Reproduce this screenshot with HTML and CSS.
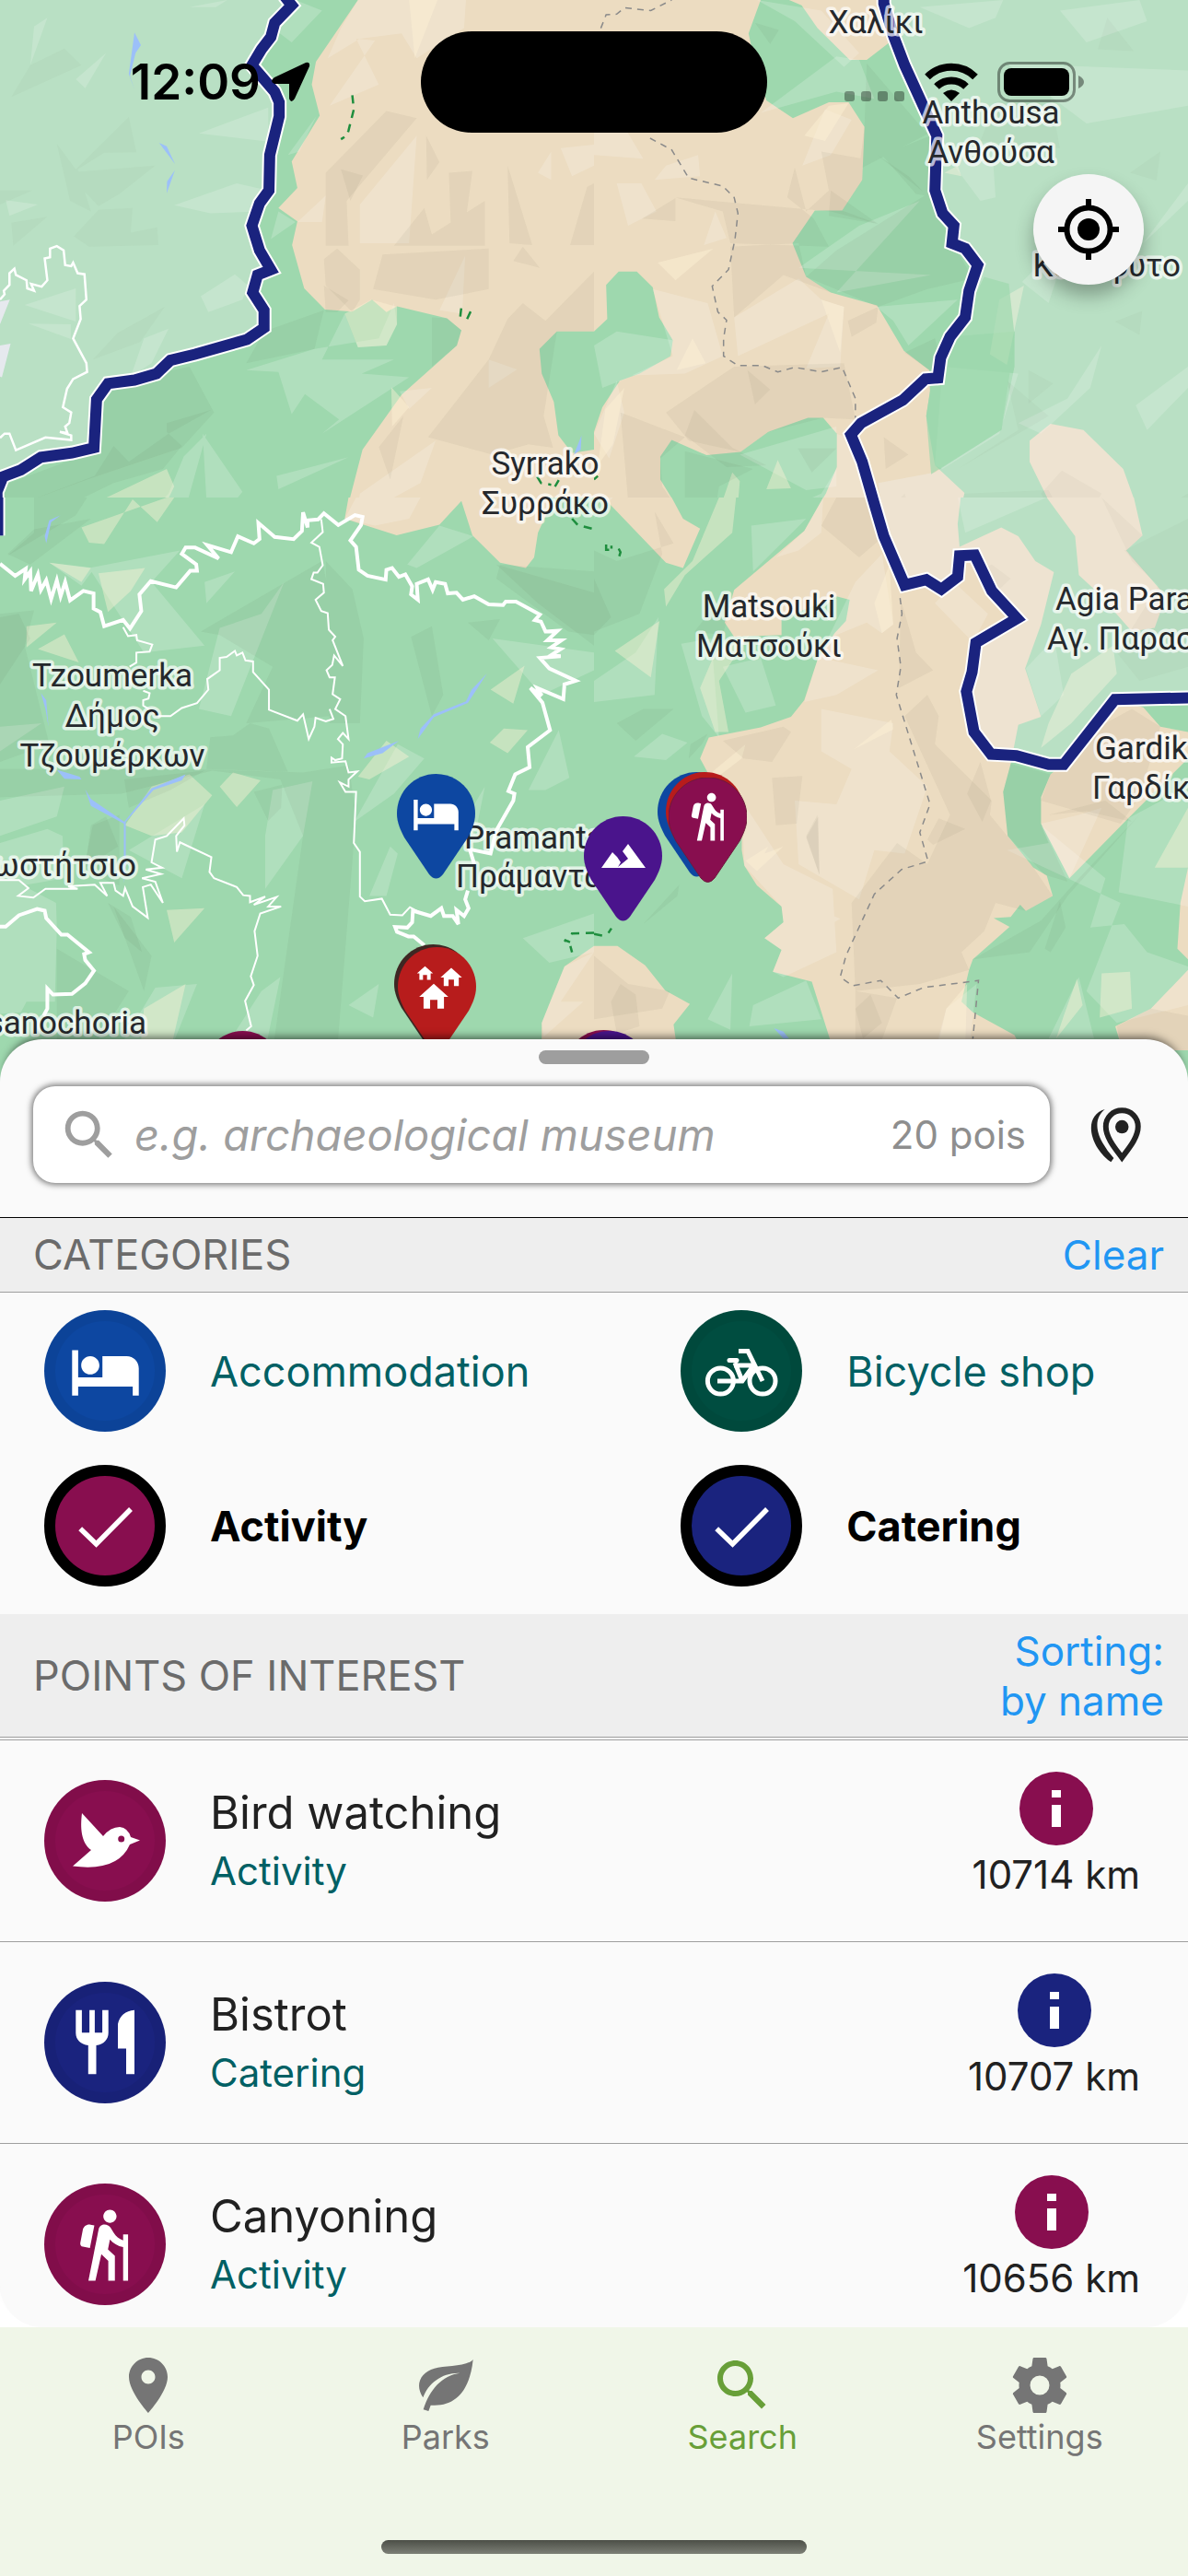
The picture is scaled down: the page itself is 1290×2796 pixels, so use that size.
FILE: index.html
```html
<!DOCTYPE html>
<html lang="en">
<head>
<meta charset="UTF-8">
<meta name="viewport" content="width=device-width, initial-scale=1.0">
<title>Search POIs</title>
<link rel="stylesheet" href="styles.css">
</head>
<body>
<!-- shared shapes -->
<svg class="defs" width="0" height="0" aria-hidden="true">
  <symbol id="pin" viewBox="0 0 85 114"><path d="M42.500 0C66 0 85 19 85 43c0 10-4 18-8 26L50 109q-7.500 9-15 0L8 69C4 61 0 53 0 43 0 19 19 0 42.500 0z"/></symbol>
  <symbol id="bed" viewBox="0 0 24 24"><path d="M7 13c1.660 0 3-1.340 3-3S8.660 7 7 7s-3 1.340-3 3 1.340 3 3 3zm12-6h-8v7H3V5H1v15h2v-3h18v3h2v-9c0-2.210-1.790-4-4-4z"/></symbol>
  <symbol id="hiker" viewBox="0 0 24 24"><path d="M13.500 5.500c1.100 0 2-.9 2-2s-.9-2-2-2-2 .9-2 2 .9 2 2 2zm4 5.280c-1.230-.37-2.220-1.170-2.800-2.180l-1-1.600c-.41-.65-1.110-1-1.840-1-.78 0-1.590.5-1.780 1.440S7 23 7 23h2.100l1.800-8 2.100 2v6h2v-7.500l-2.100-2 .6-3c1 1.150 2.410 2.010 4 2.340V23H19V9h-1.500v1.780zM7.430 13.130l-2.120-.41c-.54-.11-.9-.63-.79-1.170l.76-3.930c.21-1.080 1.260-1.790 2.340-1.580l1.160.23-1.350 6.860z"/></symbol>
  <symbol id="house" viewBox="0 0 24 24"><path d="M9.500 20v-6h5v6H19v-8h3L12 3 2 12h3v8z"/></symbol>
  <symbol id="check" viewBox="0 0 80 80"><path d="M13.200 43.300 30.500 60 68 22" fill="none" stroke="#fff" stroke-width="5.500"/></symbol>
  <symbol id="search" viewBox="0 0 24 24"><path d="M15.500 14h-.79l-.28-.27C15.410 12.590 16 11.110 16 9.500 16 5.910 13.090 3 9.500 3S3 5.910 3 9.500 5.910 16 9.500 16c1.610 0 3.090-.59 4.230-1.570l.27.28v.79l5 4.990L20.490 19l-4.990-5zm-6 0C7.010 14 5 11.990 5 9.500S7.010 5 9.500 5 14 7.010 14 9.500 11.990 14 9.500 14z"/></symbol>
</svg>

<div class="screen">
  <div class="map">
    <svg class="map-canvas" viewBox="0 0 1290 1174" preserveAspectRatio="xMidYMin slice" role="img" aria-label="Map">
      <rect class="forest" width="1290" height="1174"/>

      <!-- north west tile -->
      <svg width="645" height="600" viewBox="0 0 1568 1568" preserveAspectRatio="none">
        <path class="rock" d="M945 0 834 175 823 240 844 328 770 458 785 533 735 590 785 628 771 695 803 818 858 878 930 884 982 850 1020 885 1048 869 1180 903 1218 937 1206 980 1060 1120 957 1275 910 1470 1047 1518 1162 1487 1218 1418 1247 1518 1295 1568H1415L1420 1510 1450 1440 1568 1440V1275L1510 1285 1474 1235 1462 1140 1430 1060 1424 990 1470 940H1568V0z"/>
        <g class="hi">
          <path d="M945 0H1230L1225 80 1100 165 1060 95 950 110 865 165 900 80zM940 110 1000 240 870 300 990 115zM1100 385 1080 690H950V580zM1228 725 1220 890 1160 880zM1055 1110 1140 1100 1080 1160zM1290 1020 1365 1048 1290 1100zM860 555 850 630 785 630zM1455 430V510L1420 490zM950 1400 1150 1250 1110 1370 940 1470zM1480 420 1568 410V470L1510 500z"/>
          <path d="M780 0 850 30 770 120 720 80zM525 378 708 305V402zM460 582 625 520 708 540 690 600 555 605zM530 840 620 778 655 810 640 850 550 885zM65 865 200 818V912zM500 20 600 0 570 20zM80 185 90 75 125 50zM200 225 280 150 225 250zM345 1068 380 960 445 932 400 1030zM15 568 100 580 25 612zM75 918 187 920V962z"/>
          <path d="M650 1050 830 990 1000 960 1040 860 1048 920 1020 980 945 985 910 890 850 1020 1040 1020 955 1060 1080 1070 850 1230 895 1190 805 1118 770 1175 735 1055zM730 1350 920 1297 735 1388zM535 1230 640 1395 625 1415 545 1420zM485 1295 545 1230 480 1480 400 1568H300L445 1400zM760 440 835 330 790 430zM735 600 780 630 715 678z"/>
        </g>
        <path class="hi-strong" d="M910 890 980 850 1048 870V920L1020 980 945 985zM215 1445 440 1330 460 1380 415 1480 350 1415 275 1530 235 1528zM1033 1098 1080 1155 1035 1210zM1080 0 1155 0 1095 165z"/>
        <g class="lo">
          <path d="M1020 315 1100 335 915 570 920 697H860V490zM1185 490 1247 485 1225 660 1190 640zM1280 570V697H1040L1120 590 1140 665zM1010 722 1290 705V820L1150 850 985 820zM1568 770V940H1470L1435 1180 1460 1270 1395 1260 1300 1290 1130 1240 1290 1020 1340 905 1380 860 1440 910zM855 735 890 705 950 765V850L930 885 860 810zM1125 385 1160 460 1127 510zM1340 470 1405 695 1345 690zM1505 695 1550 530 1568 520V695z"/>
          <path d="M150 408 200 480 340 332 360 432 275 433 205 480 240 600 185 570zM175 490 410 470 315 550 260 585zM195 670 260 595 350 590 345 660 415 645 418 695 235 700zM30 632 125 615 35 697zM245 1020 370 970 435 870 310 945zM80 185 170 138 215 185 30 275zM0 540 85 540 0 580z"/>
          <path d="M697 940 855 880 830 990 650 1030zM280 1090 500 1040 565 1170 480 1270 230 1360 90 1415V1568H0V1380L250 1280zM1140 900 1180 903 1218 937 1206 980 1140 1040z"/>
        </g>
        <path class="lo" d="M557 1163 440 1200V1225L480 1265 430 1330 300 1370 90 1480V1415L250 1350 300 1265 340 1310 445 1230zM900 480 958 498 925 570zM855 810 920 852 890 885H860zM1065 1180 1030 1360 1000 1268zM1355 740 1380 700 1425 760z"/>
        <path class="fade" d="M-8 0H762L770 15 725 65 715 105 690 140 665 185 725 260 737 290V330L712 440 710 540 685 577 665 640 685 710 715 765 680 780 667 830 697 880V930L652 963 515 1005 450 1022 413 1060 355 1078 285 1088 255 1133 248 1270 190 1285 108 1297 55 1333 8 1352-5 1380z"/>
        <path fill="#e6e9ee" d="M0 855 26 850 0 920zM0 980 28 975 5 1070 0 1068z"/>
        <g class="water"><path d="M355 92 372 128 358 150 343 215 355 255 340 210zM420 405 440 415 462 465zM462 482 440 548 441 515zM160 1460 135 1480 122 1540 118 1520 130 1470zM1535 1235 1533 1275 1515 1290z"/></g>
        <path class="road" d="M0 850 12 835 10 825 25 808V775L38 762 42 780 70 795 72 818 90 825 82 805 110 813 125 795 118 733 132 730V705L150 698 168 710 172 752 188 755 193 745 205 775 223 778 228 850 210 868 213 905 193 960 228 1030 230 1055 193 1075 177 1103 166 1155 188 1170 183 1200 172 1210 178 1228 158 1225 188 1235V1248L120 1241 42 1277 25 1230H12L0 1242"/>
        <path class="trail" d="M930 270 934 310 920 370 916 384 900 395M1215 898 1218 870M1233 905 1243 882M1418 1352 1428 1370 1455 1375M1465 1380 1475 1362"/>
        <path class="park-halo" d="M750-12 770 15 725 65 715 105 690 140 665 185 725 260 737 290V330L712 440 710 540 685 577 665 640 685 710 715 765 680 780 667 830 697 880V930L652 963 515 1005 450 1022 413 1060 355 1078 285 1088 255 1133 248 1270 190 1285 108 1297 55 1333 8 1352-8 1395-6 1568"/>
        <path class="park-line" d="M750-12 770 15 725 65 715 105 690 140 665 185 725 260 737 290V330L712 440 710 540 685 577 665 640 685 710 715 765 680 780 667 830 697 880V930L652 963 515 1005 450 1022 413 1060 355 1078 285 1088 255 1133 248 1270 190 1285 108 1297 55 1333 8 1352-8 1395-6 1568"/>
      </svg>

      <!-- north east tile -->
      <svg x="645" width="645" height="600" viewBox="0 0 1568 1568" preserveAspectRatio="none">
        <path class="rock" d="M0 0H440L408 95 425 180 455 285 525 335 620 290H672L714 360 708 510 655 597H583L524 690 560 785 625 830 747 866 818 995 885 1050 887 1110 877 1180 900 1320 978 1398 960 1480 968 1568H490L555 1500 612 1400 641 1325V1230L605 1185H565L460 1225 387 1282 297 1291 205 1248 175 1295V1360L235 1465 280 1500 250 1568H165L50 1440 0 1440V1225L22 1155 68 1080 120 1060 202 1010 208 965 172 900 155 815 113 770H65L32 808 35 905 0 940zM515 0 548 15 590 80 675 170H720L780 120 770 0zM1150 1250 1205 1202 1292 1220 1397 1330 1447 1480 1448 1525 1405 1568H1268L1200 1420 1150 1310zM985 1530 1077 1495 1120 1520 1150 1568H970z"/>
        <g class="hi">
          <path d="M60 520 125 520 165 600 90 640zM320 600 350 675 290 695zM190 470 275 440 280 500 160 510zM0 310 80 360 130 450 0 440zM610 310 680 340 625 440 550 470zM370 900 540 790 600 850 660 870 650 1040 560 1045 620 890 380 1010zM155 820 300 860 340 1010 240 1060 100 1065 208 1010zM0 1230 60 1080 80 1170 40 1300zM600 1400 640 1330V1230L690 1250 760 1500 640 1568H490L555 1500zM430 0 600 30 700 150 660 190 530 60z"/>
          <path d="M640 160 700 170 740 280 640 260 440 320zM860 570 640 830 890 780 540 760 700 640zM745 870 960 850 830 980 790 910zM920 1040 1120 1060 1070 1230 920 1330 900 1320zM0 980 60 940 208 965 202 1010 120 1060 22 1100zM385 1500 600 1400 520 1568H320zM385 1290 640 1210V1380L560 1390z"/>
          <path d="M860 20 1080 0 1060 50 990 80zM1090 180 1568 200V300L1300 350zM930 440 1050 400 1060 560 1020 570zM1568 520 1450 690 1568 570zM1200 860 1130 800 1260 660zM1120 1200 1250 1130 1340 980 1310 1100 1180 1230zM1430 1150 1568 1040V1100L1460 1220zM1230 30 1440 0 1460 60 1300 120z"/>
        </g>
        <path class="hi-strong" d="M620 300 672 293 610 400 555 385zM168 745 315 705 215 795zM260 960 295 1030 218 1050zM600 850 660 870 650 1000zM485 1305 520 1385 455 1388zM365 1340 385 1365 375 1490 330 1568H255L330 1450zM1070 850 1135 810 1090 1035 1045 1005zM30 1160 80 1100 50 1260 10 1320zM960 470 970 500 925 490z"/>
        <g class="lo">
          <path d="M215 560 340 600 360 690 620 700 580 620 510 560 530 475 560 600 620 540 600 430 710 450 708 510 655 597 750 635 625 600zM360 700 540 690 560 785 625 830 500 780 370 900zM370 1040 660 1030 690 1190 605 1185 460 1225 387 1282 250 1250 190 1170zM70 1170 240 1240 175 1300 180 1380 235 1465 90 1420zM760 440 900 380 900 560 850 550zM640 710 880 550 900 600 1000 790 880 820 750 870 560 785zM720 180 880 380 700 480 714 360zM240 1280 420 1330 330 1380 300 1568H240zM1090 1080 1120 1220 960 1330 1200 1180zM820 1000 900 960 920 1040 885 1050z"/>
          <path d="M1355 50 1425 145 1330 140zM1060 290 1200 250 1230 420 1020 400zM1375 912 1447 882 1440 950zM1470 1460 1568 1400V1568H1400zM978 1400 1200 1390 1230 1450 960 1500z"/>
        </g>
        <path class="lo" d="M425 65 488 85 465 125zM127 620 215 562V627zM748 440 870 545 830 500zM625 540 750 635 620 612zM670 910 750 870 745 915 680 955zM405 1050 465 1105 425 1147zM265 1163 365 1270 455 1320 350 1325 240 1235zM765 1240 830 1290 770 1330zM538 1272 640 1272 575 1340zM1415 490 1495 430 1485 512zM1147 1050 1212 1088 1147 1145zM1180 1400 1235 1335 1340 1400 1310 1450 1200 1440zM820 1400 848 1490 785 1440z"/>
        <path class="fade" d="M765 0 790 100 820 185 905 385 900 540 920 605 950 640 945 690 980 705 1013 752 990 825 980 900 940 955 1110 940V1040L1075 1220 900 1340 750 1370 775 1568H1568V0z"/>
        <path class="forest" d="M975 905 1030 785 1095 805 1110 950 1100 1040 1075 1220 890 1345 877 1180 887 1110 910 1072 925 1000z" opacity=".7"/>
        <path class="track" d="M18 80 32 42 60 40 80 22 150 30 205 0M148 392 205 425 250 505 340 528 370 560 380 605 372 680 355 765 312 812 327 885 350 908 342 960V1010L380 1037H445L485 1055 530 1042 600 1055 655 1042 690 1130V1185"/>
        <path class="trail" d="M0 1360 10 1350M30 1545 48 1542 45 1558 32 1560M65 1555 68 1568"/>
        <path class="park-halo" d="M765-10V10L790 100 820 185 905 385 900 540 920 605 950 640 945 690 980 705 1013 752 990 825 980 900 940 955 915 1015 908 1072 875 1075 815 1135 705 1200 678 1233 708 1310 735 1411 757 1503 772 1568"/>
        <path class="park-line" d="M765-10V10L790 100 820 185 905 385 900 540 920 605 950 640 945 690 980 705 1013 752 990 825 980 900 940 955 915 1015 908 1072 875 1075 815 1135 705 1200 678 1233 708 1310 735 1411 757 1503 772 1568"/>
      </svg>

      <!-- south west tile -->
      <svg y="540" width="645" height="600" viewBox="0 0 1568 1568" preserveAspectRatio="none">
        <rect class="forest" width="1568" height="1568"/>
        <path class="rock" d="M920 0 910 60 1047 107 1160 77 1218 10 1247 107 1320 185 1388 200 1410 170 1420 100 1450 30V0zM1568 1272 1490 1330 1460 1410 1430 1490V1568H1568z"/>
        <g class="hi">
          <path d="M940 0H1110L1080 60 990 80 910 60zM1568 1290 1480 1430 1540 1430 1435 1530 1430 1490 1490 1330z"/>
          <path d="M0 650 110 640 0 720zM235 200 475 150 400 240 540 420 380 440zM130 185 250 200 215 250zM540 240 620 210 545 300zM610 620 750 240 690 330 580 370 525 600zM0 860 170 820 150 905 0 960zM720 830 825 805 800 960 700 1110 700 960zM340 1000 540 870 480 1080zM1300 400 1568 440V490L1430 560zM1380 1250 1568 1180V1290L1450 1320zM1395 830 1475 660 1503 795 1440 830zM1030 990 1050 1010 1020 1130H975zM935 920 1050 700 1120 740 1040 840zM410 1390 520 1380 450 1568H310zM590 1568 690 1400 740 1360 700 1568zM1075 190 1160 80 1250 110 1100 200zM920 1440 1000 1380 985 1475zM1180 1000 1280 820 1250 980z"/>
        </g>
        <path class="hi-strong" d="M215 85 440 0H460L415 70 350 5 275 132 235 128zM260 215 383 200 345 265 285 325zM70 365 150 355 70 425zM100 430 170 388 208 468zM330 930 400 820 500 785 560 845 480 950 400 960zM580 820 615 780 688 802 625 878zM440 1170 540 1165 460 1262zM1295 545 1385 477 1355 585zM1293 695 1330 655 1393 660 1340 725zM945 792 1020 690 1080 735 975 800zM130 185 240 200 215 240zM380 1450 490 1380 450 1568H370z"/>
        <g class="lo">
          <path d="M530 380 850 180 900 420 870 620 650 640 720 480 580 390zM860 180 930 260 960 400 950 640 870 640zM1085 395 1140 365 1170 560 1140 620zM0 330 90 320 65 420 130 700 0 750zM0 770 240 770 500 770 800 780 920 760 940 900 890 1568H720L800 960 740 800 560 775 320 840 0 850zM245 930 315 900V1100L220 1060zM1310 190 1568 270V420L1420 300zM20 160 90 90 240 60 80 190zM1235 355 1320 345 1290 405zM300 1160 400 1300 380 1400zM150 1280 340 1400 240 1568H150z"/>
        </g>
        <path class="lo" d="M545 770 555 680 615 675 660 640 710 655 760 778zM0 340 50 330 80 400 0 530zM328 800 540 775 450 830 340 880zM670 835 745 815 742 880 708 917zM1320 190 1568 210V390L1500 380 1310 230zM285 1150 345 1190 375 1290 330 1250zM1420 280 1568 330V390L1500 370zM90 0H230L200 50 20 165 90 100zM240 930 280 905 312 990 225 1050z"/>
        <path class="hi" d="M0 980 125 940 165 960 170 1080 60 1100 148 1150 150 1220 145 1430H70L55 1460 0 1465z"/>
        <g class="water"><path d="M160 50 135 70 122 130 118 110 130 65zM150 772 210 792 215 800 170 798zM108 555 122 575 128 650 120 600zM225 828 240 855 328 920 400 825 490 785 480 802 405 830 332 920V1040L327 1095V925L240 875zM1285 500 1235 583 1145 623 1103 685 1110 655 1145 615 1230 578 1245 545zM1053 690 1010 725 960 740 970 725z"/></g>
        <g class="road">
          <path d="M848 62 852 98 822 128 843 140 852 192 838 213H828L822 232 853 245 855 270 833 290 848 322 865 328 868 375 885 395 878 405 905 478 882 448 877 475 862 490 870 510H884L878 558 898 572 885 600 912 620 920 685 905 668 892 685 905 700 903 740 885 745 875 738V752L912 748 920 780 943 777 920 800V820L897 808 912 835H940L934 980 950 1005V1132L963 1145 1008 1138 1030 1183 1062 1185 1082 1162 1110 1178"/>
          <path d="M325 368 338 393 360 390 362 405 402 417 395 437 360 440V468L342 480M378 548 395 555 392 570 378 575V590L420 620H450L480 597 520 583 550 545 547 515 580 490V455L598 452 620 435 625 448 640 440 648 462 668 465V495L710 545V602L785 633 800 615 815 685 830 650 833 625 860 635 880 628 870 600"/>
          <path d="M0 1085 50 1085 75 1108 48 1130 88 1135 120 1110H205L180 1103 250 1098 283 1130 265 1093H300L305 1115 325 1130 330 1108 350 1160 390 1192 377 1105 398 1098 430 1150 410 1090 375 1080 425 1068 385 1055 428 1050 400 1035 410 970 440 960 485 910 487 930 465 960 467 1005 475 978 558 1020 553 1062 565 1080 625 1105 642 1128 660 1130V1148L700 1132 670 1155 730 1133 708 1160H742L687 1180 672 1230 680 1300 662 1358 670 1383 647 1428 663 1500 650 1512"/>
        </g>
        <g class="road main">
          <path d="M0 188 40 222 68 202 65 232 80 210 82 265 100 218 108 262 122 235 135 288 150 235 160 280 172 240 185 292 220 265 247 272V315L265 325 275 365 325 347 343 372 373 322 368 275 398 237 465 255 502 208H520L518 190 480 160 490 142H515L577 173 547 135 610 155 628 110 670 130 685 118 682 72 725 112 775 118 797 95 800 42 812 85V65L840 62 855 45 893 78 937 50 957 55 953 78 925 122 940 140 947 205 970 222 1018 233 1020 205 1035 200 1053 225 1070 218 1088 252 1085 275 1103 290 1100 245 1130 232 1142 262 1150 240 1175 245 1182 272 1205 270 1222 290 1252 280 1290 303 1328 305 1335 295H1362L1425 332 1412 348 1428 352 1440 380 1472 378 1445 405 1482 405 1455 425 1480 430 1455 447 1480 450 1425 455 1450 485 1520 520 1490 530 1487 572 1418 540 1430 562 1400 540 1432 582 1452 660 1393 708 1398 765 1360 785 1342 833 1358 840 1355 860 1310 945 1295 1010 1240 998 1252 1040M1235 1115 1228 1140 1237 1165 1225 1187 1205 1170 1210 1210 1195 1187H1172L1165 1165 1137 1187 1090 1172 1088 1205 1075 1220 1043 1218 1048 1232 1078 1245H1092L1120 1270"/>
          <path d="M0 1217H15L50 1185 98 1167 118 1172 122 1193 162 1240H178L235 1290 222 1295 225 1312 248 1342 225 1378 190 1408 140 1410 125 1393V1450L115 1470"/>
        </g>
        <path class="trail" d="M1510 60 1525 78 1568 90M1568 1235 1510 1237 1502 1260 1490 1255 1505 1270 1510 1290"/>
        <path class="park-halo" d="M-6-8V108"/><path class="park-line" d="M-6-8V108"/>
      </svg>

      <!-- south east tile -->
      <svg x="645" y="540" width="645" height="600" viewBox="0 0 1568 1568" preserveAspectRatio="none">
        <rect class="forest" width="1568" height="1568"/>
        <path class="rock" d="M605 0 555 95 370 262 345 355 370 395 495 390V345L640 280 675 290 665 350 635 385 590 460 555 575 520 622 440 652 303 681 280 740 300 780 390 860V1000L397 1045 430 1100 495 1160 500 1205 450 1250 495 1283 472 1345 575 1373 632 1568H1130L1110 1525 1000 1460 970 1430 990 1340 1000 1310 1097 1218 1055 1193 1100 1190 1125 1155 1140 1173 1211 1130 1195 1072 1160 1050 1092 960 1080 835 1100 755 1120 645 1180 622 1138 485 1180 360 1214 212 1165 180 1120 110 1075 85 965 140 960 75 968 0zM25 0 190 185 235 200 280 88 235 60 205 0zM1205 785 1180 850V925L1255 1080 1410 910 1568 740V665L1495 650 1450 595 1375 573 1240 755zM1195 0 1270 110 1280 220 1330 270 1420 380 1480 370 1510 280 1405 150 1448 108 1425 0zM0 1272H62L135 1327 188 1398 253 1437 210 1495 220 1568H0zM1568 1340 1470 1450 1376 1500 1395 1568H1568zM1568 1050 1548 1150 1540 1280 1568 1310z"/>
        <g class="hi">
          <path d="M760 160 790 360 760 385 720 355 640 390 620 460 750 490 640 560 555 580 590 460 690 240zM600 600 790 640 780 720 880 820 820 1010 740 1000 700 1140 540 1040 530 860 640 870 680 770 600 720zM390 860 500 1040 630 1110 640 1290 500 1360 472 1345 495 1283 450 1250 500 1205 495 1160 397 1045zM575 1160 650 1195 580 1240zM605 0 555 95 480 170 540 150 600 100zM930 1450 1010 1380 990 1568H900zM950 240 1040 330 1000 410 900 300zM1280 900 1340 880 1255 1080 1180 925z"/>
          <path d="M0 520 110 440 170 340 160 560 0 580zM0 60 50 0H20zM415 80 560 60 420 210zM105 735 180 670 247 695 190 745zM230 415 310 400 330 680 285 620zM340 480 440 455 480 590 400 610zM1090 1000 1200 980 1180 930 1350 1080 1310 1220 1400 1210 1460 1290 1568 1330V1440L1380 1490 1300 1400 1390 1150zM1410 910 1568 820V1160L1385 1120zM300 1480 365 1350 360 1510zM420 1440 560 1370 600 1480 410 1500zM1200 1535 1280 1360 1320 1535z"/>
          <path d="M1140 485 1215 400 1240 560 1180 620zM1000 0H960L980 100 1195 0z"/>
        </g>
        <path class="hi-strong" d="M330 0H375L365 100 240 220 190 310 185 260 260 180zM55 435 173 350 150 510zM280 540 320 440 410 390 330 520 355 665 320 665zM685 715 785 630 790 658zM740 300 780 190 790 360 760 385zM400 1030 460 990 450 1010 500 990 430 1060zM1260 500 1370 420 1380 500 1260 640 1180 710 1200 640zM930 1450 985 1380 980 1568H905zM1340 1350 1415 1345 1420 1450 1335 1475zM1240 1470 1275 1365 1290 1440 1220 1535zM310 780 400 700 390 740 330 790zM1480 1050 1568 880V1050z"/>
        <g class="lo">
          <path d="M810 290 850 440 895 490 805 540zM820 620 880 560 910 620 900 700 1050 860 1045 900 1160 1050 1211 1130 1140 1173 1060 1150 1030 1230 970 1290 990 1340 860 1380 690 1400 680 1150 800 980 880 1040 940 900zM640 0H735L765 110 700 170 600 80zM470 795 550 790 535 925 480 930zM340 690 500 650 520 665 470 750 395 740zM560 960 590 900 595 1070zM690 1400 800 1420 750 1568H690zM0 1300 90 1380 200 1400 180 1450 0 1480zM1200 900 1350 860 1410 910 1420 920 1300 890zM1000 1310 1180 1200 1280 1080 1440 900 1250 1130 1150 1290z"/>
          <path d="M160 40 210 130 60 180 0 150V380L120 330 180 160zM130 600 210 600 110 690 60 640zM1100 755 1205 785 1180 850V925L1250 1090 1190 1070 1092 960 1080 835zM1400 150 1568 60V480L1440 520 1380 440 1490 250zM130 1210 225 1098 220 1130zM255 700 300 670 285 700 250 740z"/>
        </g>
        <path class="lo" d="M1205 785 1240 760 1350 640 1420 600 1495 650 1440 850 1390 925 1180 860zM985 840 1020 750 1048 860 1025 920zM880 970 910 910 980 940 895 985zM560 965 592 905 595 1070zM1230 1145 1245 1220 1205 1290 1190 1280zM0 230 45 340 0 390zM265 380 310 320 350 350 340 390zM45 1430 70 1380 110 1410 120 1500 60 1520zM690 1450 730 1410 760 1490 710 1535zM1380 1500 1470 1450 1568 1470V1568H1395zM1030 200 1050 190 1100 230 1060 270zM1340 0 1448 108 1405 150 1480 240 1420 180z"/>
        <path class="fade" d="M735 0 765 110 820 248 877 233 917 260 960 225 965 165 1005 163 1050 265 1117 343 1008 412 998 495 983 550 1003 665 1048 728 1115 732 1200 757H1240L1375 573 1568 568V0z"/>
        <path class="water" d="M475 1505 500 1515 515 1535H500z"/>
        <path class="track" d="M808 285 813 330 800 400 810 480 798 560 887 870 860 950 882 1032 812 1055 740 1125 665 1300 650 1360 682 1385 757 1370 803 1420 870 1390 1015 1370 1000 1535"/>
        <path class="trail" d="M40 148H32V132L46 135V145M65 145 70 155 65 172M0 1238 22 1243M38 1235 46 1222"/>
        <path class="park-halo" d="M727-35 735 0 765 110 820 248 877 233 917 260 960 225 965 165 1005 163 1050 265 1117 343 1008 412 998 495 983 550 1003 665 1048 728 1115 732 1200 757H1240L1375 573 1580 568"/>
        <path class="park-line" d="M727-35 735 0 765 110 820 248 877 233 917 260 960 225 965 165 1005 163 1050 265 1117 343 1008 412 998 495 983 550 1003 665 1048 728 1115 732 1200 757H1240L1375 573 1580 568"/>
      </svg>

      <g class="places">
        <text class="mid" x="951" y="36">Χαλίκι</text>
        <text class="mid" x="1076" y="134">Anthousa</text><text class="mid" x="1076" y="177">Ανθούσα</text>
        <text class="end" x="1282" y="300">Κατάφυτο</text>
        <text class="mid" x="592" y="515">Syrrako</text><text class="mid" x="592" y="558">Συρράκο</text>
        <text class="mid" x="835" y="670">Matsouki</text><text class="mid" x="835" y="713">Ματσούκι</text>
        <text x="1146" y="662">Agia Para</text><text x="1137" y="705">Αγ. Παρασ</text>
        <text x="1189" y="824">Gardik</text><text x="1186" y="867">Γαρδίκ</text>
        <text class="mid" x="122" y="745">Tzoumerka</text><text class="mid" x="122" y="789">Δήμος</text><text class="mid" x="122" y="832">Τζουμέρκων</text>
        <text class="end" x="148" y="951">ωστήτσιο</text>
        <text class="end" x="159" y="1122">sanochoria</text>
        <text x="504" y="921">Pramanta</text><text x="495" y="963">Πράμαντα</text>
      </g>

      <g class="pins">
        <use href="#pin" x="431" y="840" width="85" height="114" fill="#0d47a1"/>
        <use href="#bed" x="447" y="857" width="53" height="53" fill="#fff"/>
        <use href="#pin" x="634" y="886" width="85" height="114" fill="#4a148c"/>
        <path d="M653 942 665 925 670 930 674 936 671 941 682 932 676 924 682 916 701 942z" fill="#fff"/>
        <use href="#pin" x="714" y="838" width="85" height="114" fill="#0d47a1"/>
        <use href="#pin" x="723" y="838" width="85" height="114" fill="#b71c1c"/>
        <use href="#pin" x="726" y="844" width="85" height="114" fill="#880e4f" stroke="#6d1a3c" stroke-width="1"/>
        <use href="#hiker" x="740" y="857" width="58" height="58" fill="#fff"/>
        <use href="#pin" x="428" y="1025" width="85" height="114" fill="#3e2723"/>
        <use href="#pin" x="432" y="1028" width="85" height="114" fill="#b71c1c"/>
        <use href="#house" x="451" y="1046" width="21" height="21" fill="#fff"/>
        <use href="#house" x="476" y="1047" width="28" height="28" fill="#fff"/>
        <use href="#house" x="452" y="1063" width="38" height="38" fill="#fff"/>
        <use href="#pin" x="221" y="1119" width="85" height="114" fill="#880e4f"/>
        <use href="#pin" x="613" y="1118" width="85" height="114" fill="#880e4f"/>
        <use href="#pin" x="619" y="1119" width="85" height="114" fill="#4a148c"/>
      </g>
    </svg>

    <div class="status-bar">
      <div class="clock">
        <span>12:09</span>
        <svg width="42" height="44" viewBox="0 0 42 44"><path d="M3 17 37 1q5-1 4 4L25 40q-4 6-6 0V24H3q-6-3 0-7z"/></svg>
      </div>
      <div class="island"></div>
      <div class="signals">
        <svg class="dots" width="66" height="12" viewBox="0 0 66 12"><rect width="11" height="11" rx="3"/><rect x="18" width="11" height="11" rx="3"/><rect x="36" width="11" height="11" rx="3"/><rect x="54" width="11" height="11" rx="3"/></svg>
        <svg width="58" height="42" viewBox="0 0 58 42"><g fill="none" stroke="#000" stroke-width="8"><path d="M3 15.500a37 37 0 0 1 52 0"/><path d="M13 26a23 23 0 0 1 32 0"/></g><path d="M20 33q9-7 18 0l-9 9z"/></svg>
        <svg width="94" height="44" viewBox="0 0 94 44"><rect x="1.500" y="1.500" width="82" height="41" rx="12" fill="none" stroke="#000" stroke-opacity=".4" stroke-width="3"/><rect x="7" y="7" width="71" height="30" rx="8"/><path d="M88 15q6 3 6 7t-6 7z" opacity=".4"/></svg>
      </div>
    </div>

    <button class="locate" type="button" aria-label="My location">
      <svg width="66" height="66" viewBox="0 0 66 66"><circle cx="33" cy="33" r="23.500" fill="none" stroke="#000" stroke-width="6"/><circle cx="33" cy="33" r="12"/><path d="M30 0h6v8h-6zM30 58h6v8h-6zM0 30h8v6H0zM58 30h8v6h-8z"/></svg>
    </button>
  </div>

  <main class="sheet">
    <div class="handle"></div>
    <form class="search-row">
      <div class="search-box">
        <svg class="search-icon" width="70" height="70"><use href="#search"/></svg>
        <input class="search-input" type="text" aria-label="Search POIs" placeholder="e.g. archaeological museum">
        <span class="count">20 pois</span>
      </div>
      <button class="all-pins" type="button" aria-label="Show on map">
        <svg width="60" height="66" viewBox="50 40 180 200" fill="#222"><path d="M159 59C129 59 106 82 106 112 106 150 140 188 159 214 178 188 212 150 212 112 212 82 189 59 159 59z" fill="none" stroke="#222" stroke-width="18"/><circle cx="159" cy="113" r="22"/><path d="M103 55C50 70 45 130 80 185q20 30 43 44l9-13Q110 192 95 165C65 110 78 75 103 55z"/></svg>
      </button>
    </form>

    <section>
      <header class="bar categories-bar">
        <h2>CATEGORIES</h2>
        <button class="bar-action" type="button">Clear</button>
      </header>
      <div class="categories">
        <label class="category">
          <input type="checkbox">
          <span class="badge blue"><svg width="79" height="79" fill="#fff"><use href="#bed"/></svg></span>
          <span class="category-name">Accommodation</span>
        </label>
        <label class="category">
          <input type="checkbox">
          <span class="badge green"><svg width="80" height="80" viewBox="0 0 80 80" fill="none" stroke="#fff" stroke-width="5"><circle cx="17.400" cy="51" r="14"/><circle cx="63" cy="51" r="14"/><path d="M14 51H41L54 33M33 31 41 51M37 18.500H47L63 51M32 34H56"/><path d="M27 28.500h8" stroke-linecap="round"/></svg></span>
          <span class="category-name">Bicycle shop</span>
        </label>
        <label class="category">
          <input type="checkbox" checked>
          <span class="badge plum"><svg width="80" height="80"><use href="#check"/></svg></span>
          <span class="category-name">Activity</span>
        </label>
        <label class="category">
          <input type="checkbox" checked>
          <span class="badge navy"><svg width="80" height="80"><use href="#check"/></svg></span>
          <span class="category-name">Catering</span>
        </label>
      </div>
    </section>

    <section>
      <header class="bar pois-bar">
        <h2>POINTS OF INTEREST</h2>
        <button class="bar-action" type="button">Sorting:<br>by name</button>
      </header>
      <ul class="pois">
        <li class="poi">
          <span class="badge plum"><svg width="80" height="80" viewBox="0 0 80 80" fill="#fff"><path fill-rule="evenodd" d="M5 67.500 25 50C14 42 13 26 15 10L38 35Q46 25 56 25 65 26 68 36L78 39.500 67 44Q54 74 5 67.500zM57.700 34.500a3.500 3.500 0 1 0 0 7 3.500 3.500 0 1 0 0-7z"/></svg></span>
          <div class="poi-text"><h3>Bird watching</h3><p>Activity</p></div>
          <div class="poi-side"><button class="info plum" type="button" aria-label="About Bird watching"><svg width="10" height="40" viewBox="0 0 10 40"><path d="M0 0h10v8H0zM0 16h10v24H0z"/></svg></button><span>10714 km</span></div>
        </li>
        <li class="poi">
          <span class="badge navy"><svg width="80" height="80" viewBox="0 0 80 80" fill="#fff"><path d="M8.300 4.800h6.600v24.500h8.200V4.800h5.800v24.500h8.200V4.800h6.600v24.700c0 7-5 12.600-13.200 13.500v31.200h-8.700V43c-8-.9-13.500-6-13.500-13.500zM72 4.800v69.400h-9V46.600h-9V20q3-14 18-15.200z"/></svg></span>
          <div class="poi-text"><h3>Bistrot</h3><p>Catering</p></div>
          <div class="poi-side"><button class="info navy" type="button" aria-label="About Bistrot"><svg width="10" height="40" viewBox="0 0 10 40"><path d="M0 0h10v8H0zM0 16h10v24H0z"/></svg></button><span>10707 km</span></div>
        </li>
        <li class="poi">
          <span class="badge plum"><svg width="86" height="86" fill="#fff"><use href="#hiker"/></svg></span>
          <div class="poi-text"><h3>Canyoning</h3><p>Activity</p></div>
          <div class="poi-side"><button class="info plum" type="button" aria-label="About Canyoning"><svg width="10" height="40" viewBox="0 0 10 40"><path d="M0 0h10v8H0zM0 16h10v24H0z"/></svg></button><span>10656 km</span></div>
        </li>
      </ul>
    </section>
  </main>

  <nav class="tabs">
    <a class="tab" href="#pois"><svg viewBox="0 0 24 24"><path d="M12 2C8.130 2 5 5.130 5 9c0 5.250 7 13 7 13s7-7.750 7-13c0-3.870-3.130-7-7-7zm0 9.500c-1.380 0-2.500-1.120-2.500-2.500s1.120-2.500 2.500-2.500 2.500 1.120 2.500 2.500-1.120 2.500-2.500 2.500z"/></svg>POIs</a>
    <a class="tab" href="#parks"><svg viewBox="54 29 216 216"><path d="M251 53C230 78 160 72 125 82 80 95 60 135 88 177 105 130 150 95 208 97 150 105 110 150 89 216L106 221 113 202C190 208 240 160 251 53z"/></svg>Parks</a>
    <a class="tab active" href="#search"><svg viewBox="0 0 24 24"><use href="#search"/></svg>Search</a>
    <a class="tab" href="#settings"><svg viewBox="0 0 24 24"><path d="M12 15.500A3.500 3.500 0 0 1 8.500 12 3.500 3.500 0 0 1 12 8.500a3.500 3.500 0 0 1 3.500 3.500 3.500 3.500 0 0 1-3.500 3.500m7.430-2.530c.04-.32.07-.64.07-.97s-.03-.66-.07-1l2.110-1.630c.19-.15.24-.42.12-.64l-2-3.460c-.12-.22-.39-.31-.61-.22l-2.490 1c-.52-.39-1.060-.73-1.690-.98l-.37-2.650A.506.506 0 0 0 14 2h-4c-.25 0-.46.18-.5.42l-.37 2.650c-.63.25-1.170.59-1.690.98l-2.490-1c-.22-.09-.49 0-.61.22l-2 3.460c-.13.22-.07.49.12.64L4.570 11c-.04.34-.07.67-.07 1s.03.65.07.97l-2.110 1.660c-.19.15-.25.42-.12.64l2 3.460c.12.22.39.3.61.22l2.490-1.010c.52.4 1.060.74 1.690.99l.37 2.650c.04.24.25.42.5.42h4c.25 0 .46-.18.5-.42l.37-2.650c.63-.26 1.170-.59 1.690-.99l2.490 1.010c.22.08.49 0 .61-.22l2-3.460c.12-.22.07-.49-.12-.64z"/></svg>Settings</a>
    <div class="home-indicator"></div>
  </nav>
</div>
</body>
</html>
```
FILE: styles.css
```css
:root{--plum:#880e4f;--navy:#1a237e;--teal:#006064;--link:#2196f3;--paper:#fafafa;}
*{box-sizing:border-box;}
body{margin:0;background:#fff;color:#212121;font-family:"Inter","Noto Sans",sans-serif;}
h2,h3,p,ul{margin:0;padding:0;font-weight:400;}
button{border:0;padding:0;background:none;font:inherit;cursor:pointer;}
.defs{position:absolute;}
.screen{display:flex;flex-direction:column;height:100vh;overflow:hidden;}

/* map */
.map{position:relative;flex:none;height:1174px;margin-bottom:-46px;}
.map-canvas{display:block;width:100%;height:100%;}
.forest{fill:#9ed8ae;}
.rock{fill:#ecdcc1;}
.hi{fill:#fff;fill-opacity:.19;}
.hi-strong{fill:#fff4d6;fill-opacity:.42;}
.lo{fill:#3c3c28;fill-opacity:.05;}
.fade{fill:#f4f4f4;fill-opacity:.32;}
.water{fill:#9cc0f9;}
.road{fill:none;stroke:#fff;stroke-width:2.5;vector-effect:non-scaling-stroke;}
.road path,.trail,.track,.park-line,.park-halo{vector-effect:non-scaling-stroke;fill:none;}
.road path{stroke-width:2;}
.main path{stroke-width:4;}
.trail{stroke:#1e8e3e;stroke-width:2.5;stroke-dasharray:9 7;}
.track{stroke:#8a8a8a;stroke-width:1.5;stroke-dasharray:7 6;}
.park-halo{stroke:#fff;stroke-width:16;}
.park-line{stroke:#1a237e;stroke-width:12;}
.places{font-family:"Roboto","Noto Sans",sans-serif;font-size:35px;fill:#25282c;stroke:#fff;stroke-opacity:.7;stroke-width:7;stroke-linejoin:round;paint-order:stroke;}
.mid{text-anchor:middle;}
.end{text-anchor:end;}

/* system status, lies over the map */
.status-bar{position:absolute;top:34px;left:0;right:0;display:grid;grid-template-columns:1fr 376px 1fr;align-items:center;}
.clock{display:flex;align-items:center;justify-content:flex-end;gap:12px;padding-right:120px;font-size:53px;line-height:60px;font-weight:600;color:#000;}
.island{height:110px;border-radius:55px;background:#000;}
.signals{display:flex;align-items:center;gap:21px;padding-left:84px;}
.dots{align-self:flex-end;opacity:.35;}

.locate{position:absolute;top:189px;right:48px;display:flex;align-items:center;justify-content:center;width:120px;height:120px;border-radius:50%;background:#f5f5f5;box-shadow:0 12px 20px rgba(0,0,0,.3);}

/* bottom sheet */
.sheet{position:relative;flex:1;min-height:0;overflow:hidden;border-radius:46px;background:var(--paper);box-shadow:0 -8px 10px -6px rgba(0,0,0,.6);}
.handle{width:120px;height:15px;margin:12px auto 24px;border-radius:8px;background:#9e9e9e;}
.search-row{display:flex;align-items:center;gap:42px;padding:0 48px 37px 36px;}
.search-box{flex:1;display:flex;align-items:center;height:105px;padding:0 26px;border-radius:24px;background:#fff;box-shadow:0 0 6px 2px rgba(0,0,0,.5);}
.search-icon{flex:none;fill:#9e9e9e;}
.search-input{flex:1;min-width:0;margin-left:14px;border:0;padding:0;background:none;outline:0;font:italic 47px/58px "Inter",sans-serif;color:#212121;}
.search-input::placeholder{color:#9e9e9e;opacity:1;}
.count{font-size:42px;line-height:52px;color:#8e8e8e;}
.all-pins{display:flex;padding:0;}

.bar{display:flex;align-items:center;justify-content:space-between;padding:0 26px 0 36px;background:#eee;font-size:44px;line-height:54px;}
.bar h2{font-size:45px;color:#6b6b6b;}
.bar-action{color:var(--link);text-align:right;}
.categories-bar{height:82px;border-top:1px solid #000;border-bottom:1px solid #9e9e9e;}
.pois-bar{height:137px;border-bottom:4px double #9e9e9e;background-clip:padding-box;}

.categories{display:grid;grid-template-columns:11fr 8fr;row-gap:36px;padding:19px 48px 30px;}
.category{position:relative;display:flex;align-items:center;gap:48px;color:var(--teal);font-size:45px;cursor:pointer;}
.category input{position:absolute;opacity:0;}
.category input:checked + .badge{border-color:#000;}
.category input:checked ~ .category-name{font-weight:700;color:#000;}
.badge{flex:none;display:flex;align-items:center;justify-content:center;width:132px;height:132px;border:12px solid rgba(0,0,0,.05);border-radius:50%;}
.blue{background:#0d47a1;}
.green{background:#004d40;}
.plum{background:var(--plum);}
.navy{background:var(--navy);}

.pois{list-style:none;}
.poi{display:flex;align-items:center;gap:48px;height:219px;padding:0 52px 0 48px;border-bottom:1px solid #9e9e9e;}
.poi-text{flex:1;}
.poi-text h3{font-size:49px;line-height:66px;}
.poi-text p{font-size:42px;line-height:60px;color:var(--teal);}
.poi-side{display:flex;flex-direction:column;align-items:center;gap:5px;padding-bottom:12px;font-size:42px;line-height:54px;}
.info{display:flex;align-items:center;justify-content:center;width:80px;height:80px;border-radius:50%;fill:#fff;}

/* tabs */
.tabs{flex:none;display:grid;grid-template-columns:repeat(4,1fr);align-content:space-between;height:270px;padding:27px 0 24px;background:#f0f6e8;}
.tab{display:flex;flex-direction:column;align-items:center;font-size:36px;line-height:40px;color:#757575;fill:currentColor;text-decoration:none;}
.tab svg{width:72px;height:72px;}
.tab.active{color:#689f38;}
.home-indicator{grid-column:1 / -1;justify-self:center;width:462px;height:15px;border-radius:8px;background:linear-gradient(#4c4f47,#7c7f76);}
```
